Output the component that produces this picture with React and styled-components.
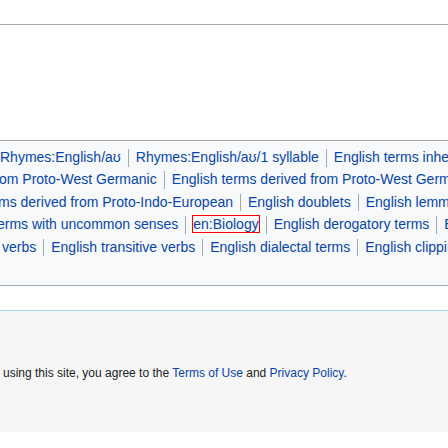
import React from "react";
import styled, { createGlobalStyle } from "styled-components";

const GlobalStyle = createGlobalStyle`
  html, body {
    margin: 0;
    padding: 0;
    background: #ffffff;
  }
  body {
    font-family: "Liberation Sans", Arial, sans-serif;
    color: #202122;
  }
`;

const Page = styled.div`
  width: 448px;
  overflow: hidden;
`;

const HeaderRule = styled.div`
  height: 24px;
  border-bottom: 1px solid #a2a9b1;
`;

const Content = styled.div`
  padding-top: 115px;
  padding-bottom: 24px;
`;

const CatLinks = styled.div`
  margin: 0 -20px;
  padding: 5px 20px 27px;
  border: 1px solid #a2a9b1;
  background: #f8f9fa;
  font-size: 14px;
  line-height: 22.4px;
`;

const CatRow = styled.div`
  white-space: nowrap;
  margin-left: ${(p) => p.shift}px;
`;

const CatItem = styled.span`
  display: inline-block;
  line-height: 1.25em;
  margin: 0.125em 0;
  padding: 0 7px;
  border-left: 1px solid #a2a9b1;

  &:first-child {
    padding-left: 0;
    border-left: 0;
  }
`;

const CatLink = styled.a`
  color: #0645ad;
  text-decoration: none;
  outline: ${(p) => (p.$focused ? "1px solid #ff0000" : "none")};
`;

const Footer = styled.footer`
  border-top: 1px solid #a7d7f9;
  background: #f6f6f6;
  padding: 54px 3px 50px;
  font-size: 12px;
  line-height: 16.8px;
  color: #202122;
  white-space: nowrap;

  a {
    color: #0645ad;
    text-decoration: none;
  }
`;

const rows = [
  { shift: -1, items: ["Rhymes:English/aʊ", "Rhymes:English/aʊ/1 syllable", "English terms inherited from Old English"] },
  { shift: -2, items: ["om Proto-West Germanic", "English terms derived from Proto-West Germanic"] },
  { shift: -3, items: ["ms derived from Proto-Indo-European", "English doublets", "English lemmas"] },
  { shift: -4, items: ["erms with uncommon senses", "en:Biology", "English derogatory terms", "English nouns"] },
  { shift: 1, items: ["verbs", "English transitive verbs", "English dialectal terms", "English clippings"] },
];

export default function App() {
  return (
    <Page>
      <GlobalStyle />
      <HeaderRule />
      <Content>
        <CatLinks>
          {rows.map((row, i) => (
            <CatRow key={i} shift={row.shift}>
              {row.items.map((item) => (
                <CatItem key={item}>
                  <CatLink href="#" $focused={item === "en:Biology"}>
                    {item}
                  </CatLink>
                </CatItem>
              ))}
            </CatRow>
          ))}
        </CatLinks>
      </Content>
      <Footer>
        using this site, you agree to the <a href="#">Terms of Use</a> and{" "}
        <a href="#">Privacy Policy</a>.
      </Footer>
    </Page>
  );
}
